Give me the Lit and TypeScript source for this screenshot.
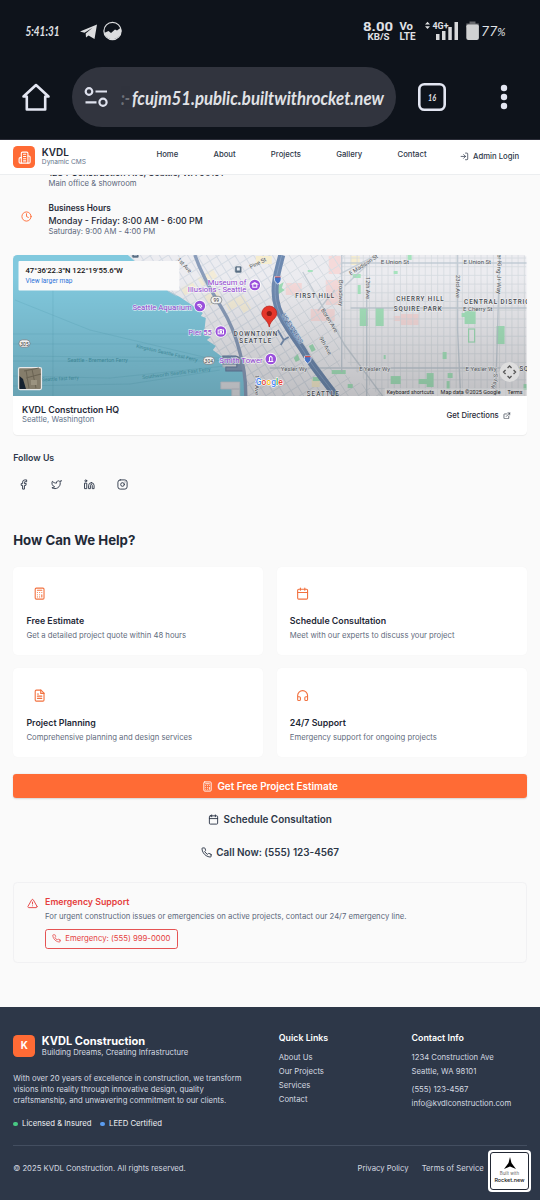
import { LitElement, html, svg, css } from "lit";
import { customElement, property } from "lit/decorators.js";

const ICONS: Record<string, any> = {
  building: svg`<path d="M6 22V4a2 2 0 0 1 2-2h8a2 2 0 0 1 2 2v18Z"/><path d="M6 12H4a2 2 0 0 0-2 2v6a2 2 0 0 0 2 2h2"/><path d="M18 9h2a2 2 0 0 1 2 2v9a2 2 0 0 1-2 2h-2"/><path d="M10 6h4M10 10h4M10 14h4M10 18h4"/>`,
  login: svg`<path d="M15 3h4a2 2 0 0 1 2 2v14a2 2 0 0 1-2 2h-4"/><path d="m10 17 5-5-5-5"/><path d="M15 12H3"/>`,
  clock: svg`<circle cx="12" cy="12" r="10"/><path d="M12 6v6l4 2"/>`,
  external: svg`<path d="M18 13v6a2 2 0 0 1-2 2H5a2 2 0 0 1-2-2V8a2 2 0 0 1 2-2h6"/><path d="M15 3h6v6M10 14 21 3"/>`,
  facebook: svg`<path d="M18 2h-3a5 5 0 0 0-5 5v3H7v4h3v8h4v-8h3l1-4h-4V7a1 1 0 0 1 1-1h3z"/>`,
  twitter: svg`<path d="M22 4s-.7 2.1-2 3.4c1.6 10-9.4 17.3-18 11.6 2.2.1 4.4-.6 6-2C3 15.500.5 9.600 3 5c2.200 2.600 5.600 4.100 9 4-.9-4.200 4-6.600 7-3.800 1.100 0 3-1.200 3-1.200z"/>`,
  linkedin: svg`<path d="M16 8a6 6 0 0 1 6 6v7h-4v-7a2 2 0 0 0-4 0v7h-4v-7a6 6 0 0 1 6-6z"/><rect width="4" height="12" x="2" y="9"/><circle cx="4" cy="4" r="2"/>`,
  instagram: svg`<rect width="20" height="20" x="2" y="2" rx="5"/><path d="M16 11.370A4 4 0 1 1 12.630 8 4 4 0 0 1 16 11.370z"/><path d="M17.500 6.500h.01"/>`,
  calculator: svg`<rect width="16" height="20" x="4" y="2" rx="2"/><path d="M8 6h8M16 14v4M16 10h.01M12 10h.01M8 10h.01M12 14h.01M8 14h.01M12 18h.01M8 18h.01"/>`,
  calendar: svg`<path d="M8 2v4M16 2v4"/><rect width="18" height="18" x="3" y="4" rx="2"/><path d="M3 10h18"/>`,
  file: svg`<path d="M14.500 2H6a2 2 0 0 0-2 2v16a2 2 0 0 0 2 2h12a2 2 0 0 0 2-2V7.500z"/><path d="M14 2v6h6M16 13H8M16 17H8M10 9H8"/>`,
  headphones: svg`<path d="M3 14h3a2 2 0 0 1 2 2v3a2 2 0 0 1-2 2H5a2 2 0 0 1-2-2v-7a9 9 0 0 1 18 0v7a2 2 0 0 1-2 2h-1a2 2 0 0 1-2-2v-3a2 2 0 0 1 2-2h3"/>`,
  phone: svg`<path d="M22 16.920v3a2 2 0 0 1-2.180 2 19.790 19.790 0 0 1-8.630-3.070 19.500 19.500 0 0 1-6-6 19.790 19.790 0 0 1-3.070-8.670A2 2 0 0 1 4.110 2h3a2 2 0 0 1 2 1.720c.127.96.361 1.903.7 2.810a2 2 0 0 1-.45 2.110L8.090 9.910a16 16 0 0 0 6 6l1.270-1.270a2 2 0 0 1 2.110-.45c.907.339 1.850.573 2.810.7A2 2 0 0 1 22 16.920z"/>`,
  alert: svg`<path d="m21.730 18-8-14a2 2 0 0 0-3.480 0l-8 14A2 2 0 0 0 4 21h16a2 2 0 0 0 1.730-3Z"/><path d="M12 9v4M12 17h.01"/>`,
};

@customElement("ui-icon")
class UiIcon extends LitElement {
  @property() name = "";
  @property({ type: Number }) size = 20;
  static styles = css`
    :host { display: inline-flex; flex: none; }
    svg { display: block; fill: none; stroke: currentColor; stroke-width: 2; stroke-linecap: round; stroke-linejoin: round; }
  `;
  render() {
    return html`<svg viewBox="0 0 24 24" width=${this.size} height=${this.size}>${ICONS[this.name]}</svg>`;
  }
}

@customElement("phone-chrome")
class PhoneChrome extends LitElement {
  static styles = css`
    :host { display: block; height: 139.5px; background: #0e131b; border-bottom: 1.5px solid #2b2d38; box-sizing: border-box; }
    svg { display: block; }
    .status { height: 62px; }
    .bar { display: flex; align-items: center; height: 60px; margin-top: 5px; }
    .home { width: 72px; }
    .pill { width: 324px; height: 60px; border-radius: 30px; background: #31343e; }
    .tabs { margin-left: 20px; }
    .dots { margin-left: 42px; }
    text { font-family: Roboto, sans-serif; fill: #e0e2e6; }
    .hand { font-family: Lato, sans-serif; font-style: italic; }
    .b { font-weight: 700; }
  `;
  render() {
    return html`
      <svg class="status" width="540" height="62" viewBox="0 0 540 62">
        <text class="hand b" x="25.500" y="35.800" font-size="13" textLength="34" lengthAdjust="spacingAndGlyphs">5:41:31</text>
        <path d="M80 31.500 97 24.500 94.500 39 88.500 35.500 86 37.500 85.700 33.500 92.500 27.800 84.500 32.700Z" fill="#dcdddf"/>
        <circle cx="112.500" cy="31" r="8.600" fill="none" stroke="#dcdddf" stroke-width="1.200"/>
        <path d="M104 33 108.500 31 111 33 115 29.500 117 30.500 121 27.500A8.800 8.800 0 1 1 104 33Z" fill="#dcdddf"/>
        <text class="b" x="363" y="31.300" font-size="12.500" textLength="30" lengthAdjust="spacingAndGlyphs">8.00</text>
        <text class="b" x="367.500" y="40" font-size="9" textLength="22" lengthAdjust="spacingAndGlyphs">KB/S</text>
        <text class="b" x="399.500" y="29.600" font-size="10.300" textLength="13.500" lengthAdjust="spacingAndGlyphs">Vo</text>
        <text class="b" x="399.500" y="40" font-size="10.300" textLength="16" lengthAdjust="spacingAndGlyphs">LTE</text>
        <path d="m425 24.500 2.500-2.800 2.500 2.800zM425 26.200l2.500 2.800 2.500-2.800z" fill="#dcdddf"/>
        <text class="b" x="432.500" y="28.500" font-size="9.500" textLength="16" lengthAdjust="spacingAndGlyphs">4G+</text>
        <path d="M436 34h3.500v6h-3.500zM442 31h3.500v9h-3.500zM448.300 27h3.500v13h-3.500zM454.500 22h3.500v18h-3.500z" fill="#d8d9db"/>
        <path d="M469.500 21.500h6v2h3.300v4h-12.500v-4h3.200z" fill="#67696d"/>
        <rect x="466.300" y="24.500" width="12.600" height="15.500" rx="2" fill="#d0d1d2"/>
        <text class="hand" x="481" y="36" font-size="14" textLength="24.500" lengthAdjust="spacingAndGlyphs">77<tspan font-size="11">%</tspan></text>
      </svg>
      <div class="bar">
        <svg class="home" width="72" height="60" viewBox="0 67 72 60"><path d="M23.500 96.500 36 85 48.500 96.500H45.200V109.500H26.800V96.500Z" fill="none" stroke="#e3e6f2" stroke-width="2.600" stroke-linejoin="round"/></svg>
        <svg class="pill" width="324" height="60" viewBox="72 67 324 60">
          <g fill="none" stroke="#dfe2ee" stroke-width="2.200"><circle cx="89" cy="91.500" r="3.300"/><path d="M95.500 91.500H107M85.500 102.300H96.500"/><circle cx="103" cy="102.300" r="3.600"/></g>
          <text class="hand b" x="121" y="104.500" font-size="18.500" opacity=".35" textLength="9" lengthAdjust="spacingAndGlyphs">:-</text>
          <text class="hand b" x="132" y="104.800" font-size="18.500" textLength="252" lengthAdjust="spacingAndGlyphs">fcujm51.public.builtwithrocket.new</text>
        </svg>
        <svg class="tabs" width="32" height="60" viewBox="416 67 32 60">
          <rect x="419.300" y="84.300" width="25.400" height="25.400" rx="5" fill="none" stroke="#e3e6f2" stroke-width="2.600"/>
          <text class="hand b" x="428" y="101" font-size="10" textLength="8" lengthAdjust="spacingAndGlyphs">16</text>
        </svg>
        <svg class="dots" width="28" height="60" viewBox="490 67 28 60" fill="#e3e6f2"><circle cx="504" cy="88" r="3.200"/><circle cx="504" cy="97" r="3.200"/><circle cx="504" cy="106" r="3.200"/></svg>
      </div>`;
  }
}

const range = (a: number, b: number, step: number) => {
  const out: number[] = [];
  for (let v = a; v <= b; v += step) out.push(v);
  return out;
};

// label: x, y, text, width, size, css class, rotation
type Label = [number, number, string, number, number, string, number?];
const LABELS: Label[] = [
  [208, 284.500, "Museum of", 38.500, 7.500, "poi"],
  [188, 292.500, "Illusions - Seattle", 58.500, 7.500, "poi"],
  [132.500, 309.500, "Seattle Aquarium", 59.500, 7.500, "poi"],
  [188.500, 334.500, "Pier 55", 23.500, 7.500, "poi"],
  [219.500, 362.500, "Smith Tower", 43.500, 7.500, "poi"],
  [234, 335.800, "DOWNTOWN", 43.500, 6.300, "area"],
  [239.500, 342.600, "SEATTLE", 32, 6.300, "area"],
  [295.500, 298, "FIRST HILL", 39, 6.300, "area"],
  [396.500, 301, "CHERRY HILL", 47.500, 6.300, "area"],
  [394, 310.700, "SQUIRE PARK", 48, 6.300, "area"],
  [464.500, 303.800, "CENTRAL DISTRICT", 70, 6.300, "area"],
  [307, 395.500, "SEATTLE", 32, 6.300, "area"],
  [520, 371, "SQUIRE", 24, 6.300, "area"],
  [381, 264, "E Union St", 28.500, 5.800, "road"],
  [464, 264, "E Union St", 27.500, 5.800, "road"],
  [463.500, 310.800, "E Cherry St", 29.500, 5.800, "road"],
  [281, 370.500, "Yesler Wy", 26.500, 5.800, "road"],
  [359.500, 371, "E Yesler Wy", 31, 5.800, "road"],
  [466, 371, "E Yesler Wy", 31, 5.800, "road"],
  [351, 275.500, "E Madison St", 33, 5.800, "road", -33],
  [251, 269, "Pine St", 18, 5.800, "road", -27],
  [177, 260, "1st Ave", 18, 5.800, "road", 47],
  [339.500, 280, "Broadway", 26, 5.800, "road", 90],
  [366, 277, "12th Ave", 22, 5.800, "road", 90],
  [456, 275, "23rd Ave", 23, 5.800, "road", 90],
  [498, 254, "er King Jr Way", 40, 5.800, "road", 91],
  [321, 310, "Boren Ave", 27, 5.800, "road", 58],
  [319, 338, "9th Ave", 20, 5.800, "road", 60],
  [495, 390, "Way S", 16, 5.800, "road", -78],
  [255, 375, "1st Ave", 20, 5.800, "road", 90],
  [282, 315, "US EXPRESS", 34, 5.500, "hwy", 58],
  [136, 347.500, "Kingston Seattle Fast Ferry", 63, 5, "ferry", 13],
  [67.500, 361.800, "Seattle - Bremerton Ferry", 60.500, 5, "ferry"],
  [142.500, 379, "Southworth Seattle Fast Ferry", 69, 5, "ferry", -7],
  [42, 381.300, "Seattle fast ferry", 37, 5, "ferry", -3],
];
const GREENS = [
  [360, 308, 8, 18], [376, 308, 8, 18], [465, 311, 11, 13], [462, 313, 5, 4], [497, 326, 8, 18],
  [427, 373, 7, 14], [419, 379, 13, 5], [391, 376, 10, 8], [443, 352, 4, 7], [408, 255, 4, 5],
  [448, 373, 5, 5], [447, 381, 3, 8], [353, 274, 8, 4], [358, 285, 3, 9], [394, 271, 4, 3], [332, 370, 14, 4],
  [313, 377, 10, 4], [348, 384, 5, 4], [524, 384, 3, 6], [384, 355, 2, 4], [308, 270, 5, 2],
];
const PINKS = [[401, 314, 18, 11], [394, 316, 7, 5], [326, 280, 14, 25], [286, 283, 16, 12], [329, 256, 12, 18], [311, 309, 24, 12]];
const CREAMS = [[226, 262, 18, 10], [222, 280, 14, 12], [206, 262, 14, 8], [236, 298, 14, 9], [247, 300, 9, 16], [277, 326, 12, 9], [284, 334, 10, 10], [351, 256, 9, 9], [312, 379, 8, 8], [256, 256, 16, 8]];

@customElement("city-map")
class CityMap extends LitElement {
  static styles = css`
    :host { display: block; overflow: hidden; }
    svg { display: block; width: 100%; height: 100%; }
    text { font-family: Roboto, sans-serif; }
    .poi { fill: #9043cf; font-weight: 400; stroke: #fff; stroke-width: 1.3; paint-order: stroke; stroke-opacity: .7; }
    .area { fill: #44484d; font-weight: 500; stroke: #fff; stroke-width: 1; paint-order: stroke; stroke-opacity: .6; }
    .road { fill: #505459; stroke: #eee; stroke-width: 1; paint-order: stroke; stroke-opacity: .6; }
    .hwy { fill: #4a6488; stroke: #b9cbe2; stroke-width: .8; paint-order: stroke; }
    .ferry { fill: #3f8796; }
    .legal { fill: #222; font-size: 5.800px; }
    .title { fill: #111; font-weight: 500; font-size: 7.400px; }
    .link { fill: #2a73d9; font-size: 6.800px; }
  `;
  label(l: Label) {
    const [x, y, text, w, size, cls, rot = 0] = l;
    return svg`<text class=${cls} x=${x} y=${y} font-size=${size} textLength=${w} lengthAdjust=${cls === "area" ? "spacing" : "spacingAndGlyphs"} transform=${`rotate(${rot} ${x} ${y})`}>${text}</text>`;
  }
  pin(x: number, y: number, glyph: unknown) {
    return svg`<circle cx=${x} cy=${y} r="6.200" fill="#fff" opacity=".8"/><circle cx=${x} cy=${y} r="5.300" fill="#9a4fdb"/><g transform=${`translate(${x} ${y})`} fill="none" stroke="#fff" stroke-width="1">${glyph}</g>`;
  }
  shield(x: number, y: number, n: string) {
    return svg`<rect x=${x - 5.500} y=${y - 3.700} width="11" height="7.400" rx="3.500" fill="#f2f2f2" stroke="#6c7378" stroke-width=".7"/><text x=${x} y=${y + 2} font-size="5" text-anchor="middle" fill="#333">${n}</text>`;
  }
  render() {
    const box = (r: number[], fill: string) => svg`<rect x=${r[0]} y=${r[1]} width=${r[2]} height=${r[3]} fill=${fill}/>`;
    return html`<svg viewBox="13 255 514 141" preserveAspectRatio="none">
      <defs>
        <linearGradient id="shade" x1="0" y1="0" x2="0" y2="1"><stop offset=".15" stop-color="#000" stop-opacity="0"/><stop offset="1" stop-color="#000" stop-opacity=".19"/></linearGradient>
        <clipPath id="west"><path d="M128 255H281L275 285 278 310 308 358 338 396H245V370L223 361 213 348 205 338 203 317 192 305 180 297 167 290Z"/></clipPath>
        <clipPath id="mid"><path d="M281 255H345L340 300V372L385 396H338L308 358 278 310 275 285Z"/></clipPath>
        <clipPath id="east"><path d="M341 255H527V396H380L341 355Z"/></clipPath>
      </defs>
      <rect x="13" y="255" width="514" height="141" fill="#ececf0"/>
      ${PINKS.map((r) => box(r, "#f5dada"))}
      <g clip-path="url(#west)"><g transform="rotate(-32 240 320)">
        ${CREAMS.slice(0, 7).map((r) => box(r, "#f3ecd8"))}
        ${range(150, 330, 8).map((v) => svg`<path d=${`M${v} 200V440`} stroke="#d4dae3" stroke-width="1"/>`)}
        ${range(200, 440, 9).map((v) => svg`<path d=${`M120 ${v}H380`} stroke="#d6dce4" stroke-width="1"/>`)}
      </g></g>
      ${CREAMS.slice(7).map((r) => box(r, "#f6edcf"))}
      <g clip-path="url(#mid)"><g transform="rotate(-33 310 320)">
        ${range(220, 400, 9).map((v) => svg`<path d=${`M${v} 200V440`} stroke="#d6dce2" stroke-width=".9"/>`)}
        ${range(220, 430, 10).map((v) => svg`<path d=${`M220 ${v}H400`} stroke="#d8dde3" stroke-width=".9"/>`)}
      </g></g>
      <g clip-path="url(#east)" stroke="#d6dbe0" fill="none">
        ${range(345, 527, 6.200).map((v) => svg`<path d=${`M${v} 255V396`} stroke-width=".8"/>`)}
        ${range(258, 396, 8.700).map((v) => svg`<path d=${`M341 ${v}H527`} stroke-width=".8"/>`)}
      </g>
      ${GREENS.map((r) => box(r, "#a6e3bd"))}
      <rect x="469" y="329" width="6" height="13" fill="#ececf0" stroke="#9fdcb6" stroke-width="1.200"/>
      <path d="m276 287 8-5-2 6 3 2-9 6zM309 346l4-2 3 6-4 2zM294 358l4-4 2 6-4 2z" fill="#9fdcb6"/>
      <g fill="none" stroke="#b9c4ce" stroke-width="1.400">
        <path d="M342 255V372M367 265V396M458 255V330L461 396M500 255 498 330 496 396M341 263H527M351 308H527M270 368H527" stroke-opacity=".8"/>
        <path d="M303 272 345 345 383 396M340 274 377 255M318 311 335 290M345 286 377 256" stroke-opacity=".75"/>
      </g>
      <path d="M13 255H128L167 290 180 297 192 305 203 313 201 316 206 318 204 335 211 337 207 340 216 346 213 350 224 358 219 362 231 370 245 370V396H221V390H239V387H221V381H240V376H231L223 366 219 372 13 396Z" fill="#81c9de"/>
      <path d="M13 396H245V370H228L219 362 13 370Z" fill="#81c9de"/>
      <path d="M223 357H244V370H228V367H223ZM221 382H240V389H221ZM232 389H240V396H232ZM168 291 177 296" fill="#dcdee3" stroke="#c6ccd4" stroke-width=".8"/>
      <path d="M223 356H236L243 359V371H226V367H237V364H223Z" fill="#8199b6" stroke="#657e9f" stroke-width="1"/>
      <g fill="none" stroke="#5cabc0" stroke-width=".5" opacity=".6">
        <path d="M15 300 90 330 225 362M13 334 205 334M13 344H210M13 361 223 361M13 376 110 378 225 366M13 386 130 384 220 370M53 290V396M13 356 220 358"/>
      </g>
      <path d="M195 255C203 278 214 295 222 308S237 340 240 352 246 375 246 396" fill="none" stroke="#8a9dba" stroke-width="3.400"/>
      <path d="M282 255C277 274 272 290 278 308S299 342 305 353 326 382 337 397" fill="none" stroke="#6f8ab0" stroke-width="7"/>
      <path d="M282 255C277 274 272 290 278 308S299 342 305 353 326 382 337 397" fill="none" stroke="#8ba5c7" stroke-width=".8"/>
      <path d="M278 330 284 340 281 345M289 337 284 340" fill="none" stroke="#7890b2" stroke-width="1.800"/>
      <rect x="13" y="255" width="514" height="141" fill="url(#shade)"/>
      ${[[278, 279.500], [308, 359]].map(([x, y]) => svg`<path d=${`M${x - 3} ${y - 3}h6q1.500 5-3 7.500q-4.500-2.500-3-7.500z`} fill="#4673c4" stroke="#fff" stroke-width=".7"/><path d=${`M${x - 2.800} ${y - 2.500}h5.600`} stroke="#d0504e" stroke-width="1.200"/>`)}
      ${[[135.500, 254.500], [238.500, 269.500]].map(([x, y]) => svg`<rect x=${x - 3.500} y=${y - 3.500} width="7" height="7" rx="1.500" fill="#586d83" stroke="#eee" stroke-width=".6"/><rect x=${x - 1.500} y=${y - 2} width="3" height="3" fill="#e7edf3"/>`)}
      ${LABELS.map((l) => this.label(l))}
      ${this.shield(216.500, 300, "99")}${this.shield(24.500, 343.500, "305")}${this.shield(209, 360.500, "304")}
      ${this.pin(255, 285, svg`<path d="M-2.500-1 0-2.500 2.500-1ZM-2.500 2.300H2.500M-2-.5V2M2-.5V2"/>`)}
      ${this.pin(200, 306, svg`<path d="M-2.500-1Q1-3 2 1M-.5 0 1.500 2.500M-2.500-1 0 .5" />`)}
      ${this.pin(221, 331.500, svg`<rect x="-2.700" y="-1.500" width="5.400" height="3.800"/><circle r=".8" cy=".4"/><path d="M-1-2H1"/>`)}
      ${this.pin(271, 359, svg`<path d="M-2.500 2.500H2.500M-1.300 2V-1.500L0-2.800 1.300-1.500V2"/>`)}
      <path d="M269.500 327C268.500 320 262 318.500 262 313.500A7.500 7.500 0 0 1 277 313.500C277 318.500 270.500 320 269.500 327Z" fill="#e5362b" stroke="#b4241d" stroke-width=".7"/><circle cx="269.500" cy="313.500" r="2.600" fill="#8c1a14"/>
      <text x="256" y="384.500" font-size="8.500" textLength="27" lengthAdjust="spacingAndGlyphs" font-weight="500" stroke="#fff" stroke-width="1.200" paint-order="stroke"><tspan fill="#4285f4">G</tspan><tspan fill="#ea4335">o</tspan><tspan fill="#fbbc05">o</tspan><tspan fill="#4285f4">g</tspan><tspan fill="#34a853">l</tspan><tspan fill="#ea4335">e</tspan></text>
      <rect x="385" y="388" width="142" height="8" fill="#e8e8e8" opacity=".35"/>
      <text class="legal" x="387" y="394" textLength="47.500" lengthAdjust="spacingAndGlyphs">Keyboard shortcuts</text>
      <text class="legal" x="441" y="394" textLength="60" lengthAdjust="spacingAndGlyphs">Map data ©2025 Google</text>
      <text class="legal" x="508" y="394" textLength="15" lengthAdjust="spacingAndGlyphs">Terms</text>
      <circle cx="510" cy="372" r="10" fill="#dedede"/>
      <path d="m508 368 2-2 2 2M508 376l2 2 2-2M506 370l-2 2 2 2M514 370l2 2-2 2" fill="none" stroke="#555" stroke-width="1.300"/>
      <rect x="18.500" y="367.500" width="23" height="22" rx="1.500" fill="#857d6b" stroke="#e9e9e9" stroke-width="1.200"/>
      <path d="M19.500 376 23 379 26 389H19.500Z" fill="#172331"/><path d="M24 371 39 368M26 378 41 374M29 388 26 370M36 388 32 369" stroke="#6a6353" stroke-width="1" fill="none"/><path d="M31 380h6v5h-6z" fill="#9b9380"/>
      <rect x="18.500" y="261" width="161" height="29.500" rx="1" fill="#fafafa"/>
      <text class="title" x="25.500" y="272.500" textLength="97.500" lengthAdjust="spacingAndGlyphs">47°36'22.3"N 122°19'55.6"W</text>
      <text class="link" x="25.500" y="282.800" textLength="47" lengthAdjust="spacingAndGlyphs">View larger map</text>
    </svg>`;
  }
}

const HELP = [
  ["calculator", "Free Estimate", "Get a detailed project quote within 48 hours"],
  ["calendar", "Schedule Consultation", "Meet with our experts to discuss your project"],
  ["file", "Project Planning", "Comprehensive planning and design services"],
  ["headphones", "24/7 Support", "Emergency support for ongoing projects"],
];

@customElement("app-root")
class AppRoot extends LitElement {
  static styles = css`
    :host { display: block; position: relative; width: 540px; height: 1200px; overflow: hidden; background: #fafafa; font-family: Inter, sans-serif; color: #1f2937; }
    * { box-sizing: border-box; }
    .page { zoom: 0.55102; width: 980px; font-size: 14px; line-height: 20px; }
    .top { position: relative; height: 64px; background: #fff; border-bottom: 1px solid #eceef0; display: flex; padding: 0 24px; z-index: 1; }
    .logo { width: 40px; height: 40px; border-radius: 8px; background: #ff6b35; color: #fff; display: flex; align-items: center; justify-content: center; flex: none; }
    .top .logo { margin-top: 12px; }
    .name { margin: 12px 0 0 12px; width: 195px; }
    .name b { display: block; font-size: 18px; line-height: 22px; font-weight: 600; }
    .name span { display: block; font-size: 12px; line-height: 16px; color: #64748b; }
    nav { display: flex; gap: 64px; font-weight: 500; margin: 17px 0 0 13px; color: #2d3748; }
    .admin { height: 20px; margin: 21px 14px 0 auto; display: flex; align-items: center; gap: 8px; font-weight: 500; color: #2d3748; }
    main { margin-top: -15px; padding: 0 24px; }
    .info { margin-left: 64px; }
    .info .l1 { font-size: 16px; line-height: 20px; font-weight: 500; }
    .info .l2 { line-height: 20px; margin-bottom: -1px; padding-top: 1px; color: #5b677a; }
    .hours { display: flex; margin-top: 22px; }
    .hours ui-icon { margin: 18px 30px 0 14px; color: #ff6b35; width: 20px; }
    .h { font-size: 15px; line-height: 26px; font-weight: 600; }
    .hours .l1 { font-size: 16px; line-height: 20px; font-weight: 500; }
    .hours .l2 { line-height: 19px; padding-top: 1px; color: #5b677a; }
    .mapcard { margin-top: 33px; background: #fff; border-radius: 8px; overflow: hidden; box-shadow: 0 1px 2px rgba(0,0,0,.06); }
    .mapcard city-map { height: 256px; }
    .mapfoot { height: 71px; display: flex; justify-content: space-between; align-items: center; padding: 0 29px 2px 16px; }
    .mapfoot b { display: block; font-size: 16px; font-weight: 600; line-height: 19px; }
    .mapfoot span { color: #64748b; line-height: 19px; display: block; }
    .mapfoot a { display: flex; align-items: center; gap: 8px; font-weight: 500; padding-top: 1px; }
    .follow { font-size: 16px; font-weight: 600; margin-top: 31px; color: #2d3748; }
    .social { display: flex; gap: 40px; margin: 29px 0 0 9px; color: #2d3748; }
    h2 { font-size: 24px; line-height: 32px; font-weight: 700; margin: 76px 0 31px; }
    .grid { display: grid; grid-template-columns: 1fr 1fr; gap: 24px; }
    .card { background: #fff; border-radius: 8px; height: 160px; padding: 25px 24px; box-shadow: 0 0 2px rgba(0,0,0,.05); }
    .tile { width: 48px; height: 48px; display: flex; align-items: center; justify-content: center; color: #f2713f; margin-bottom: 13px; }
    .card b { display: block; font-size: 16px; line-height: 24px; font-weight: 600; margin-bottom: 5px; }
    .card span { color: #5f6b7d; }
    .cta { display: flex; flex-direction: column; gap: 16px; margin-top: 32px; }
    .btn { height: 44px; border-radius: 6px; display: flex; align-items: center; justify-content: center; gap: 8px; font-size: 18px; font-weight: 600; color: #2d3748; }
    .btn.primary { background: #ff6b35; color: #fff; box-shadow: 0 1px 3px rgba(0,0,0,.15); }
    .alert { margin-top: 32px; height: 147px; border: 1px solid #f1f1f3; border-radius: 8px; padding: 23px 24px; display: flex; gap: 12px; }
    .alert > ui-icon { color: #e53e3e; margin-top: 4px; }
    .alert b { display: block; font-size: 16px; line-height: 20px; font-weight: 600; color: #e53e3e; }
    .alert p { margin: 8px 0 12px; line-height: 20px; color: #5b677a; }
    .call { display: inline-flex; align-items: center; gap: 8px; height: 36px; border: 1px solid #e55353; border-radius: 5px; padding: 0 11px; color: #e53e3e; font-size: 14.100px; font-weight: 400; }
    footer { margin-top: 79px; height: 352px; background: #2d3748; color: #d5dae1; padding: 47px 24px 0; }
    .cols { display: grid; gap: 32px; height: 205px; grid-template-columns: 450px 209px 209px; }
    .brand { display: flex; gap: 12px; margin-top: 4px; }
    .brand .logo { font-size: 18px; font-weight: 700; }
    .brand b { display: block; font-size: 20px; line-height: 23px; font-weight: 700; color: #fff; }
    .brand span { line-height: 21px; display: block; }
    .cols p { margin: 26px 0 22px; }
    .badges { display: flex; gap: 16px; color: #f0f2f5; }
    .badges span { display: flex; align-items: center; gap: 8px; }
    .badges i { width: 8px; height: 8px; border-radius: 50%; background: #48c983; }
    .badges i.blue { background: #5a9cf0; }
    .col b { display: block; font-size: 16px; line-height: 20px; font-weight: 600; color: #fff; margin-bottom: 13px; }
    .col div { line-height: 25.400px; }
    .col .gap { margin-top: 7px; }
    .legal { display: flex; border-top: 1px solid #434e60; padding-top: 30px; }
    .legal span:nth-child(2) { margin-left: auto; margin-right: 24px; }
    .legal span:nth-child(3) { margin-right: 78px; }
    .rocket { position: absolute; left: 488px; top: 1150px; width: 43px; height: 42px; border-radius: 4px; background: #fff; padding: 2px; }
    .rocket div { height: 100%; border: 1px solid #222834; border-radius: 3px; display: flex; flex-direction: column; align-items: center; padding-top: 4px; font-size: 4.500px; line-height: 6px; color: #666; }
    .rocket strong { font-size: 5.400px; font-weight: 500; color: #111; }
    .rocket svg { display: block; margin-bottom: 2px; }
  `;
  render() {
    return html`
      <phone-chrome></phone-chrome>
      <div class="page">
        <header class="top">
          <div class="logo"><ui-icon name="building" size="24"></ui-icon></div>
          <div class="name"><b>KVDL</b><span>Dynamic CMS</span></div>
          <nav>${["Home", "About", "Projects", "Gallery", "Contact"].map((n) => html`<span>${n}</span>`)}</nav>
          <div class="admin"><ui-icon name="login" size="16"></ui-icon>Admin Login</div>
        </header>
        <main>
          <div class="info"><div class="l1">1234 Construction Ave, Seattle, WA 98101</div><div class="l2">Main office &amp; showroom</div></div>
          <div class="hours"><ui-icon name="clock" size="20"></ui-icon>
            <div><div class="h">Business Hours</div><div class="l1">Monday - Friday: 8:00 AM - 6:00 PM</div><div class="l2">Saturday: 9:00 AM - 4:00 PM</div></div>
          </div>
          <section class="mapcard">
            <city-map></city-map>
            <div class="mapfoot"><div><b>KVDL Construction HQ</b><span>Seattle, Washington</span></div><a>Get Directions <ui-icon name="external" size="14"></ui-icon></a></div>
          </section>
          <div class="follow">Follow Us</div>
          <div class="social">${["facebook", "twitter", "linkedin", "instagram"].map((n) => html`<ui-icon name=${n} size="20"></ui-icon>`)}</div>
          <h2>How Can We Help?</h2>
          <div class="grid">${HELP.map(([i, t, d]) => html`<div class="card"><div class="tile"><ui-icon name=${i} size="24"></ui-icon></div><b>${t}</b><span>${d}</span></div>`)}</div>
          <div class="cta">
            <div class="btn primary"><ui-icon name="calculator" size="20"></ui-icon>Get Free Project Estimate</div>
            <div class="btn"><ui-icon name="calendar" size="20"></ui-icon>Schedule Consultation</div>
            <div class="btn"><ui-icon name="phone" size="20"></ui-icon>Call Now: (555) 123-4567</div>
          </div>
          <section class="alert"><ui-icon name="alert" size="20"></ui-icon>
            <div><b>Emergency Support</b><p>For urgent construction issues or emergencies on active projects, contact our 24/7 emergency line.</p>
              <div class="call"><ui-icon name="phone" size="16"></ui-icon>Emergency: (555) 999-0000</div></div>
          </section>
        </main>
        <footer>
          <div class="cols">
            <div>
              <div class="brand"><div class="logo">K</div><div><b>KVDL Construction</b><span>Building Dreams, Creating Infrastructure</span></div></div>
              <p>With over 20 years of excellence in construction, we transform<br>visions into reality through innovative design, quality<br>craftsmanship, and unwavering commitment to our clients.</p>
              <div class="badges"><span><i></i>Licensed &amp; Insured</span><span><i class="blue"></i>LEED Certified</span></div>
            </div>
            <div class="col"><b>Quick Links</b><div>About Us</div><div>Our Projects</div><div>Services</div><div>Contact</div></div>
            <div class="col"><b>Contact Info</b><div>1234 Construction Ave</div><div>Seattle, WA 98101</div><div class="gap">(555) 123-4567</div><div>info@kvdlconstruction.com</div></div>
          </div>
          <div class="legal"><span>© 2025 KVDL Construction. All rights reserved.</span><span>Privacy Policy</span><span>Terms of Service</span></div>
        </footer>
      </div>
      <div class="rocket"><div><svg width="12" height="12" viewBox="0 0 12 12"><path d="M6 0 7.500 6 12 12 6 9.500 0 12 4.500 6Z" fill="#000"/></svg>Built with<strong>Rocket.new</strong></div></div>`;
  }
}
